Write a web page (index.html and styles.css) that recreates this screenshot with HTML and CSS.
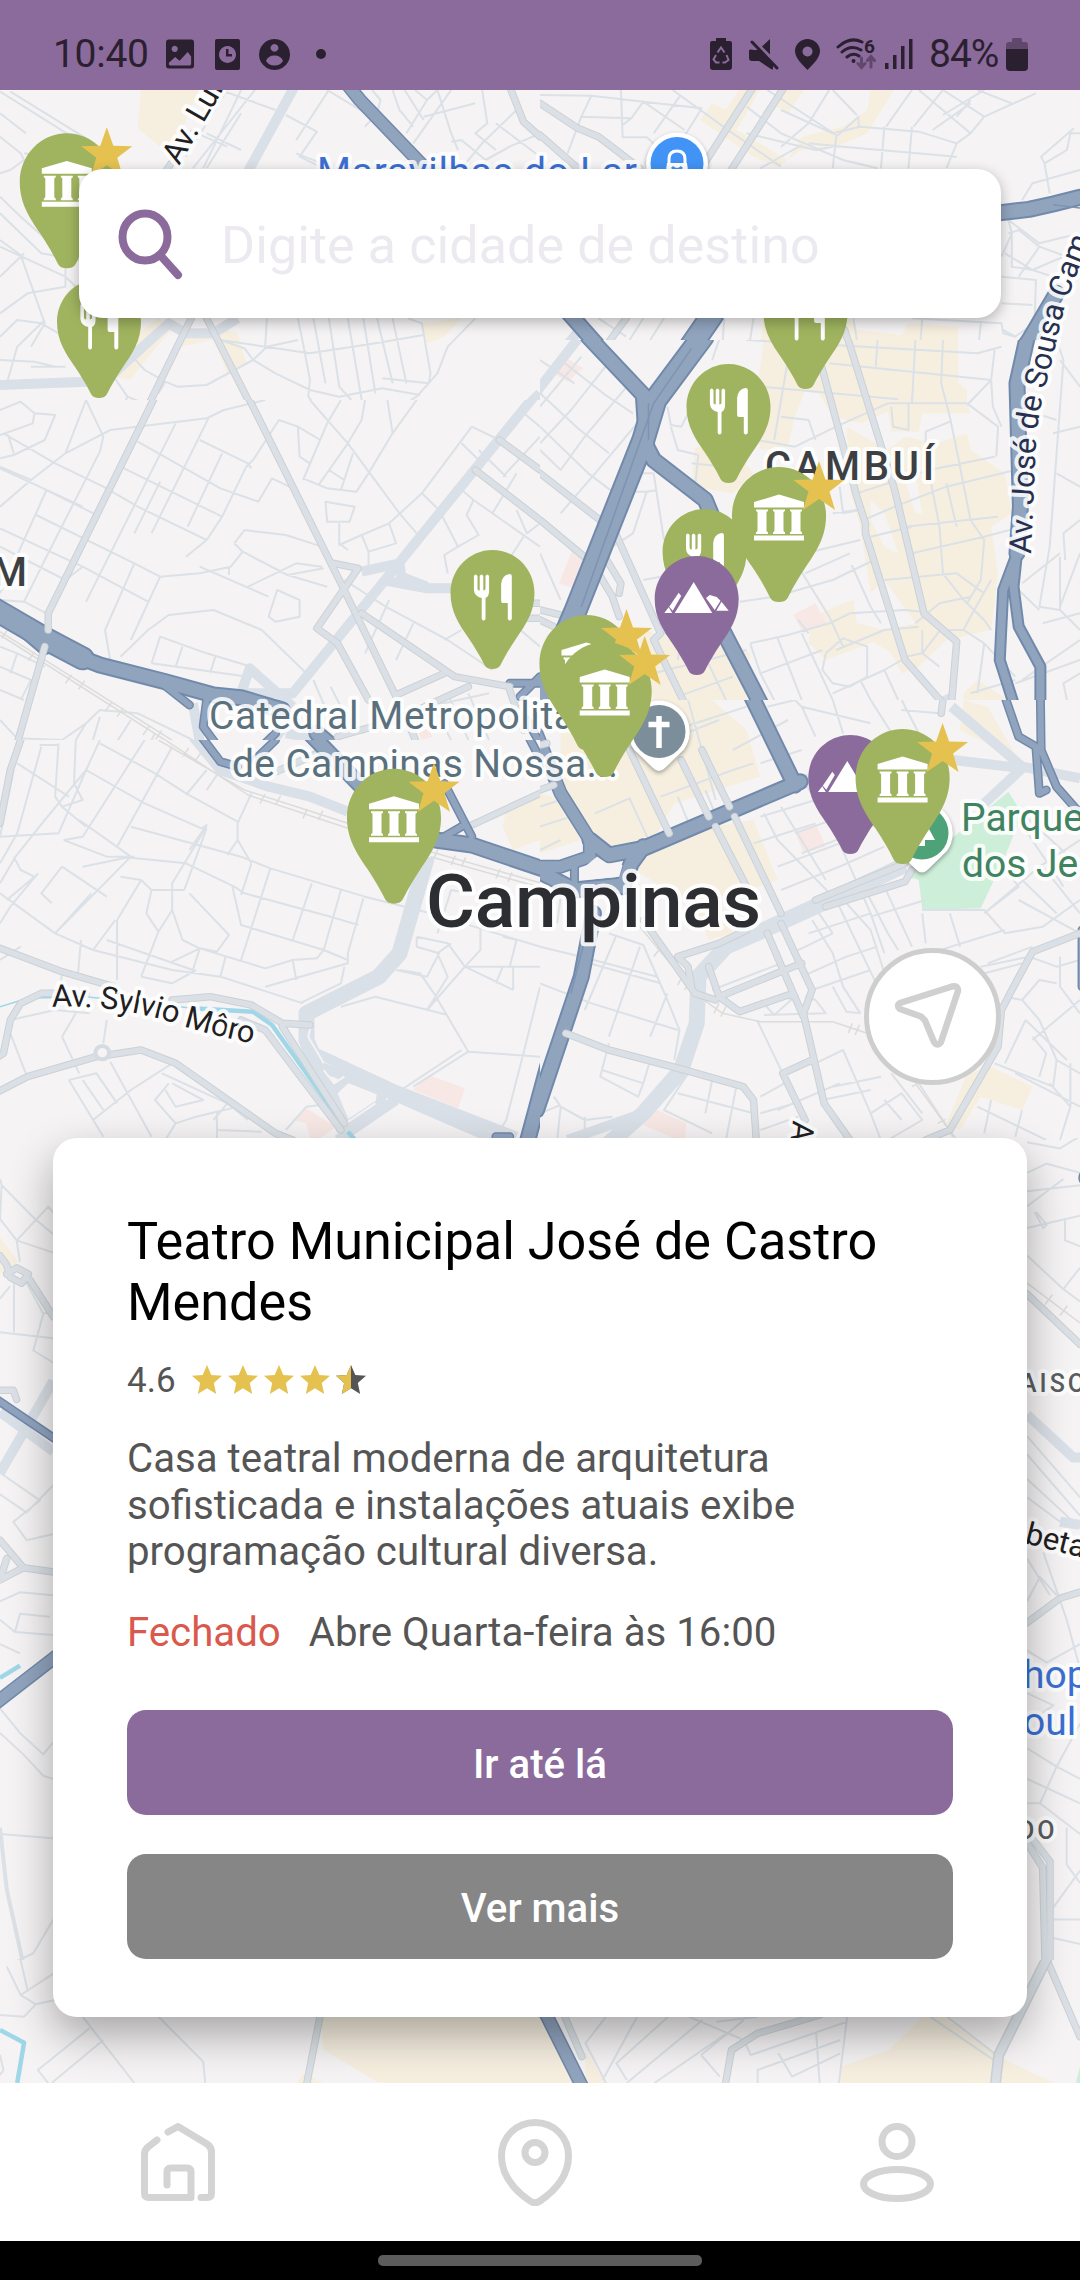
FILE: index.html
```html
<!DOCTYPE html>
<html lang="pt-BR">
<head>
<meta charset="utf-8">
<title>Mapa</title>
<link rel="stylesheet" href="styles.css">
</head>
<body>
<header class="status">
  <div class="status-left">
    <span class="clock">10:40</span>
    <svg class="ic-img" viewBox="0 0 30 30"><path fill-rule="evenodd" d="M3 0H26Q29 0 29 3V27Q29 30 26 30H3Q0 30 0 27V3Q0 0 3 0ZM9 6.500a3.200 3.200 0 1 0 .01 0ZM3 25.500Q3 27 5 27H24Q26 27 26 25V17.500L22.500 13 14 22 9.500 18 3 24Z"/></svg>
    <svg class="ic-clock" viewBox="0 0 25 31"><path fill-rule="evenodd" d="M2 0H23Q25 0 25 2V29Q25 31 23 31H2Q0 31 0 29V2Q0 0 2 0ZM12.500 7a8.500 8.500 0 1 0 .01 0ZM11 10H13.500V15H17V17.500H11Z"/></svg>
    <svg class="ic-user" viewBox="0 0 31 31"><path fill-rule="evenodd" d="M15.500 0a15.500 15.500 0 1 0 .01 0ZM15.500 5a3.900 3.900 0 1 1-.01 0ZM7 22Q9 16.500 15.500 16.500T24 22Q21 26.500 15.500 26.500T7 22Z"/></svg>
    <i class="dot"></i>
  </div>
  <div class="status-right">
    <svg class="ic-recycle" viewBox="0 0 22 32"><path d="M6 0H16V3H20Q22 3 22 6V29Q22 32 19 32H3Q0 32 0 29V6Q0 3 2 3H6Z"/><path class="cut" d="M7.500 14.500 11 9.500 14.500 14.500M16.500 17 18.500 22 15 24.500H12.500M9.500 24.500H6L3.500 21.500 6 17"/></svg>
    <svg class="ic-mute" viewBox="0 0 30 31"><path d="M0 11 2 10.500 5 11 10 11 24 26V30.500L22 30 10 22H3Q0 22 0 19ZM13 7.500 21 0V15.500Z"/><path class="ln" d="M3 3 28 29"/></svg>
    <svg class="ic-loc" viewBox="0 0 25 31"><path fill-rule="evenodd" d="M12.500 0C19 0 25 5 25 12 25 19 18 25 12.500 31 7 25 0 19 0 12 0 5 6 0 12.500 0ZM12.500 7.500a5 5 0 1 0 .01 0Z"/></svg>
    <svg class="ic-wifi" viewBox="0 0 40 32"><path class="ln" d="M2 9Q14-2 26 4M6 14Q15 6 25 12M11 19Q17 14 23 18"/><circle cx="17.500" cy="23" r="2"/><text x="28" y="14.500">6</text><path class="ln faint" d="M25.500 20v9m-3.500-3.500 3.500 4 3.500-4M35 29V19m-3.500 3.500 3.500-4 3.500 4"/></svg>
    <svg class="ic-signal" viewBox="0 0 28 30"><path d="M0 24h3.500v6H0ZM8 16h3.500v14H8ZM16 7h3.500v23H16ZM24 0h3.500v30H24Z"/></svg>
    <span class="pct">84%</span>
    <svg class="ic-batt" viewBox="0 0 22 33"><path class="pale" d="M6 1Q6 0 8 0H14Q16 0 16 1V4H19Q22 4 22 7V11H0V7Q0 4 3 4H6Z"/><path d="M0 11H22V29Q22 33 18 33H4Q0 33 0 29Z"/></svg>
  </div>
</header>

<main class="map">
  <svg class="streets" viewBox="0 90 1080 1993">
    <defs>
      <path id="pin" d="M0 0C23 0 42 19 42 43C42 62 33 75 24 88C18 97 13 105 8 115Q6 119 0 119Q-6 119-8 115C-13 105-18 97-24 88C-33 75-42 62-42 43C-42 19-23 0 0 0Z"/>
      <g id="food"><use href="#pin" class="g"/><path class="w" d="M-18.600 26q1.800-3 3.600 0V39q.5 1.500 2.200 1.500V26q1.800-3 3.600 0V40.500q2-.2 2.200-1.500V26q1.800-3 3.600 0V40Q-3.200 46.500-7 48V69q-1.900 3-3.800 0V48Q-18 46.500-18.600 40ZM8.600 34Q9.500 25 17 24q2.300 0 2.300 2V69q-2 3-4 0V53H10.500q-1.900 0-1.900-2Z"/></g>
      <g id="nature"><use href="#pin" class="p"/><path class="w" d="M-3 26 15.500 57H-22ZM-18 36.700-15.500 40-24 54.700-27.500 50.700ZM-32.400 57-28 51.300-24.500 57ZM9.300 42 13 39 20 41 23.800 44.700 18 54ZM19.600 54.700 24.800 45.700 32 54.700Z"/></g>
      <g id="museum"><use href="#pin" class="g" transform="scale(1.120 1.134)"/><path class="w" d="M0 27.600 25 35V40.500H-25V35ZM-23 42.500h12v1.500l-1.500 1V64l1.500 1.500V67H-23V65.500L-21.500 64V45L-23 44ZM-6 42.500H6v1.500L4.500 45V64L6 65.500V67H-6V65.500L-4.500 64V45L-6 44ZM11 42.500H23v1.500L21.500 45V64L23 65.500V67H11V65.500L12.500 64V45L11 44ZM-25 68.500H25V73.500H-25Z"/><path class="s" d="M40-6 46.500 12.500 65.500 13 50.500 24.500 56 43 40 32 24 43 29.500 24.500 14.500 13 33.500 12.500Z"/></g>
      <path id="sylvio" d="M52 1007Q112 1004 170 1022T262 1045"/>
      <path id="sousa" d="M1031 554L1036 445Q1038 410 1050 370L1063 313Q1070 290 1090 240"/>
    </defs>
    <rect class="land" y="90" width="1080" height="1993"/>

    <svg x="0" y="0" width="540" height="400" viewBox="0 0 1568 1200" preserveAspectRatio="none">
      <defs><path id="nw-mid" d="M555 955L410 1260M600 955L750 1260M1480 260L1520 365 1568 410M480 515L560 400"/><path id="nw-main" d="M1010 255L1045 300 1240 510"/></defs>
      <path class="yl" d="M410 260H580L520 410 470 445 400 385ZM400 1000L460 955 500 985 400 1110 380 1140 330 1130ZM520 1040L620 1020 660 1120 715 1090 690 1000 640 985 540 1010ZM1225 970L1340 955 1290 1010 1240 1030Z"/>
      <path class="st" d="M0 275L240 430M30 275L250 415M0 340L75 400M0 410L60 460 70 480 30 510 0 520M70 460L150 470M0 590L60 650 180 760M0 640L120 760 230 780M0 720L60 765 130 970 90 1040M0 740L190 830 240 880M70 760L0 830M0 940L80 880 190 860V800M0 1010L50 960 120 970 170 1000M0 1080L100 1085 160 1100M20 1150L50 1040 130 960M90 1100H190M330 1130L370 1190 340 1260M370 1190L430 1215M385 1070L420 1110 480 1145 515 1160 600 1155 735 1080 775 1040 865 1020M480 1145L460 1180M735 1080L710 1045 640 1020 770 1040 900 1060 1090 1030 1230 1005M775 955L770 1040M735 1080L800 1120 900 1170 985 1190 1110 1165 1220 1185M865 955L880 1030 900 1140 895 1190 950 1260M910 955L945 1150M955 955L985 1160 1020 1200M1010 955L1060 1260M1055 955L1090 1180M1095 955L1140 1150M1140 955L1180 1150M1185 955L1225 970 1250 1120 1245 1150 1110 1135M1380 955L1300 1040 1270 1120 1210 1190 1100 1260"/>
      <path class="st" d="M660 270L540 470M740 270L560 505M700 340L600 505M640 270L800 330M600 400L700 450M560 395L660 440M700 270L590 505M830 345L920 395 870 470 930 500M860 460L960 500M950 270L1110 370M955 270L860 420M1080 270L1105 300 1095 340 1060 380M1140 270L1160 330 1200 380M1175 270L1230 360M1205 270L1240 300 1270 270 1310 400 1330 450M1310 270L1200 430M1230 350L1380 310M1240 300L1180 400M1400 270L1415 370 1380 400 1440 450M1440 370L1568 470M1500 330L1400 430 1340 505M1310 425L1340 420 1410 480 1480 440 1568 400"/>
      <path class="wd" d="M855 260L720 515M0 1155L250 1145 330 1120 490 970 540 1000H620L690 955M1568 1180L1490 1260"/>
      <use href="#nw-mid" class="me"/><use href="#nw-mid" class="md"/>
      <use href="#nw-main" class="he w12"/><use href="#nw-main" class="hw w12"/>
    </svg>

    <svg x="540" y="0" width="540" height="340" viewBox="0 0 1568 1020" preserveAspectRatio="none">
      <defs><path id="ne-mid" d="M0 310L110 385 170 410 290 505M0 405L110 505M620 260L490 470 465 510M710 260L555 510M250 955L190 1040M885 990L895 1025"/><path id="ne-main" d="M80 935L170 1040M1320 640L1420 628 1490 612 1568 592M1500 880L1420 1020 1400 1050"/><path id="ne-fork" d="M500 945L430 1050"/></defs>
      <path class="yl" d="M500 310L540 330 580 265H640L600 340 570 390 720 480 760 410 880 380 950 330 960 265H1030L950 400 860 440 760 450 690 500 620 470 465 360ZM690 265H770L720 340 670 310ZM650 955H900L920 990 1050 1005 1070 970 1215 980V1020H640Z"/>
      <path class="st" d="M0 285L150 287 300 305 470 325M150 285L120 350 80 460M120 350L265 355 300 305M235 270L240 412H310L340 440M240 375L265 355M300 305L420 390M405 290L330 400M385 270L560 400 700 500M470 325L400 440M600 320L700 400 880 480 980 505M600 400L800 450 850 440M660 270L860 405M700 330L850 400 930 380 1100 395 1210 430 1180 505M700 440L780 370 840 270M760 435L640 505M780 430L880 440 1210 470M860 410L925 350V380M850 270L920 345M860 410L850 505M1000 380L990 505M1080 380L1070 505M1005 380L1080 270M1085 380L1170 270 1290 350 1250 400 1210 430M1100 270L1250 400M1170 345L1290 270M1290 350L1440 280M1210 350L1250 300M1270 270L1370 310M1140 390L1250 310M1550 385L1455 470 1465 490 1530 450 1540 400H1568M1465 490L1480 580M1568 510L1430 550 1400 600M1340 770L1370 700 1360 660 1450 730 1568 700M1360 700L1390 690 1450 740 1530 770M1370 700V800L1430 810 1490 830M1350 760L1430 810 1520 770M1340 830L1440 840 1435 1000M1340 910L1430 915M1345 990L1380 1010 1435 970M1450 740L1390 830M535 955L530 1030M620 955L610 1020M910 955L920 1020M1110 955L1105 1020M1080 955L1340 970 1345 1000 1380 1010M1280 970L1275 1020M170 955L250 1010M300 955L260 1020M360 955L320 1020"/>
      <use href="#ne-mid" class="me"/><use href="#ne-mid" class="md"/>
      <path class="wd" d="M130 970L60 1060"/>
      <use href="#ne-main" class="he w16"/><use href="#ne-fork" class="he w22"/><use href="#ne-fork" class="hw w22"/><use href="#ne-main" class="hw w16"/><path class="hl" d="M1490 614L1568 624"/>
    </svg>

    <svg x="0" y="400" width="540" height="340" viewBox="0 0 1568 1020" preserveAspectRatio="none">
      <defs><path id="w-mid" d="M450-10L140 640V690M130 740L50 1030M720-10L850 260 990 550 1150 890M970 490L1040 505 920 685 980 730 1070 900M1050 640L1320 830 1480 860M1450 120L1568 210M1380 210L1568 360M1360 860L1150 960 980 1010M1150 885L1290 820M1480 870L1520 990M1190 980L1210 1030M1535 610H1568M1535 655H1568"/>
      <path id="w-a" d="M-20 625L130 715 240 775"/><path id="w-b" d="M240 775L290 795 480 845 620 885 700 893 820 930M920 1000L990 1060M50 670L130 740"/><path id="w-c" d="M470 850L550 915M600 900L590 980 640 1050M1480 850H1568M1568 830L1510 890M1530 960L1568 1030M740 1060L800 1000"/></defs>
      <path class="pk" d="M1215 1000L1245 985 1255 1010 1225 1020Z"/>
      <path class="st" d="M0 30L60 5 100 40 95 70 0 105M100 40L160 45 130 120 40 165 0 175M250 0L190 160M250 0L300 110 290 155M0 200L90 240 190 160 320 90 600 55 650 30 770 0M10 100L160 190 300 260 400 320 600 420 540 470M0 320L90 240M40 160L25 110M400 125L640 265 750 305 790 235 840 260M350 200L645 350M645 350L715 200M580 120L720 190 730 205M715 200L735 180 810 60 865 80 930 120M510 70L330 440M605 55L440 400M645 160L545 380M465 245L390 400M290 155L130 480M135 270L0 580M0 205L240 320M135 270L290 350M105 345L390 490M0 385L240 500 430 605M0 440L190 540M130 480L70 605M0 600L70 605 135 640M240 500L190 540M330 440L250 605M645 350L600 420M465 530L380 720M390 490L465 530 580 520 670 500 705 455 680 430M580 500L780 590M680 430L710 390 830 405 935 440M705 455L835 525 950 560M720 560L860 490 935 500M835 525L940 505M665 500V525M780 650L805 570 870 600V650L800 665ZM305 690L320 780M305 690L390 490M350 770L430 690 490 645 620 630 760 690 900 830M440 790L465 710 600 760 730 800M440 790L720 830M530 740L510 800M625 770L610 820"/>
      <path class="st" d="M900 0L1010 130 1160 340 1210 400M990 0L950 70 880 240M1060 0L1050 60 1010 130 925 255M1125 0L1140 100 1210 0M1140 100L1070 220 1035 275 950 265 880 235M1025 160L990 270M955 210L1000 240M865 80L870 170 900 190M945 305L1030 320 1015 365H950ZM1370 80L1225 280 1130 370 1050 405 985 435V370M1340 130L1390 180M1370 80L1450 120M1130 370L1150 430 1070 455 1050 405M1010 450L985 430M1070 455V520M1225 280L1275 330 1330 440 1290 465 1300 520M1335 265L1375 300 1355 345 1390 405 1330 440M1375 300L1568 440M1510 30L1568 80M1430 340L1500 220M1460 230L1568 110M1500 330L1530 400 1568 370M1520 410L1440 540M1390 150L1470 230M1000 540L1120 620 1300 720 1430 810M1200 670L1150 780M1130 600L1060 760M1290 720L1340 690M910 840L960 960M1050 1000L1200 930 1420 880M960 860L1020 980M1300 880L1360 1020M1360 880L1420 1020M1250 900L1310 1020M1500 680L1568 740M0 740L50 760 130 800M50 760L30 820M0 800L90 840 60 900M0 870L70 900M0 960L50 1015 180 1020 250 970 290 930 400 940 560 1020M60 1030L200 1025M250 970L220 1020M380 960L330 1040M450 1000L420 1060M290 950L270 1020"/>
      <path class="rl" d="M0 695L560 1060M0 705L540 1060M190 850l18-26M228 868l18-26M305 935l18-26M340 950l18-26M415 1005l18-26M452 1018l18-26M5 715l16-24M82 782l18-26"/>
      <path class="wd" d="M1550-10L1150 500 850 880H700M560 910L580 1025M1110 540L1240 565H1310M1160 490L1165 530 1240 560M1050 515L1160 490M700 880L725 805 850 920M780 1040L840 960 910 1010M830 1000L920 1015"/>
      <use href="#w-b" class="he w16"/><use href="#w-c" class="he w8"/><use href="#w-a" class="he w22"/><use href="#w-a" class="hw w22"/><use href="#w-b" class="hw w16"/><use href="#w-c" class="hw w8"/>
      <use href="#w-mid" class="me"/><use href="#w-mid" class="md"/>
    </svg>

    <svg x="540" y="340" width="540" height="360" viewBox="0 0 1568 1080" preserveAspectRatio="none">
      <defs><path id="e-mid" d="M892-10L1030 450 1115 820 1210 905 1195 1090M815 70L920 470 945 550V580L1060 960 1170 1090M0 400L180 545M0 540L140 660M0 810L80 830M0 840L40 860M215 570L350 880 330 900 420 1090M170 700L210 770 230 830M170 620L235 730 230 760"/>
      <path id="e-a" d="M472-10L335 180 300 300 100 820 0 1060"/><path id="e-b" d="M140-10L300 165 310 320 330 360 480 480 500 530M530 870L640 1090M1415-10L1385 130 1395 500 1385 640"/><path id="e-c" d="M1385 640L1345 750 1335 960 1375 1090M1385 640L1375 740 1390 860 1453 980V1090"/></defs>
      <path class="yl" d="M650 0H1215V130L1240 150V190L1250 220H1110L1100 275H1020L1010 215 930 250 850 230 810 160 770 150 740 230 720 320 640 330 620 220ZM890 260L1010 330 1060 290 1150 310 1240 280 1250 330 1350 400 1370 520 1310 560 1330 700 1310 870 1180 900 1100 980 1050 1000 1020 940 960 900 1000 870 1090 850 1000 720 960 760 930 560 900 450ZM790 830L880 790 910 780 920 850 1000 870 960 910 830 960 780 910ZM450 320L560 330 620 400 560 460 440 440ZM280 860L330 880 560 900 610 940 600 1080H330ZM1230 1060L1270 1020 1360 1080H1230Z"/>
      <path class="land" d="M960 480L1000 520 1040 640 1000 620 960 540ZM1060 420L1090 400 1110 520 1090 520Z"/>
      <path class="pk" d="M735 825L800 790 830 850 765 880ZM90 640L140 655 100 745 55 730ZM70 50L125 85 80 125 30 95Z"/>
      <path class="st" d="M0 60L100 130M60 60L190 165 270 220M0 160L110 265 200 340M190 80L90 210 0 310M260 130L130 290M120 50L0 200M0 260L140 400 230 470M290 240L160 400 60 520M0 330L60 390 130 290M270 400H330L360 600M265 455H310L270 580 210 620M310 455L340 450M300 720L350 710 400 700M0 640L60 780M60 590L100 640M520 0L500 60M370 200L380 255 410 260 440 200M380 260L400 330 460 345M630 300L740 320 860 260 1010 190H1240L1330 260 1325 350M640 140L1040 178M720 60L680 300M840 70L1310 120 1320 30M600 0L1270 40 1340 20M980 0L975 80M1090 0L1080 190M1170 0L1165 130 1190 230 1210 330M1310 120L1240 195M1310 120L1315 200 1340 260M1020 200L1025 260 1070 270V190M1120 310V275L1190 245M700 230L780 240 800 300M440 370L540 380M460 345L450 440"/>
      <path class="st" d="M870 440L880 520 930 510M920 460L1010 430 1130 390 1320 350M940 540L1030 500 1180 440 1380 390M1060 560L1240 540 1330 530M770 640L930 600M850 520L920 510M1080 640L1290 590 1400 560M770 700L900 640M750 680L810 780 840 830 880 920M905 675L960 800 990 850M960 590L1080 560M580 785L680 770 850 720 970 660M1000 720L1210 700 1290 760M840 850L900 820 1060 810 1110 815M750 840L780 880M860 930L1000 870 1100 860M1090 850L1160 790 1250 770M1130 400L1160 560 1170 700 1230 780 1290 840 1310 870M1210 330L1250 540 1290 600 1280 720 1240 790M1180 430L1210 560M1060 560L1090 690M1160 870H1230L1290 910 1380 1010M1170 860L1110 940 1060 950M1110 870V940L1160 980M1230 870L1250 830 1310 720M610 910L640 1000 680 1080M610 910L720 885 840 850M690 895L760 1080M760 880L850 1080M830 940L820 990 850 1030 900 1040 950 1010V920L880 895 830 940M850 1060L1000 990 1050 960M930 1020L960 1080M1000 990L1040 1080M640 1000L820 930M330 1000L600 930M360 960L420 1080M470 930L540 1080M340 870L410 900 400 960M400 1070L560 1010"/>
      <path class="st" d="M1500 0L1520 60 1480 620 1450 800 1510 810 1568 870M1568 140L1510 60M1568 540L1520 580 1525 660M1510 640L1400 730M1510 650V810M1450 810L1380 740M1568 640L1510 800M1460 850L1568 820M1568 900L1400 1020M1568 960L1380 1030M1568 1000L1520 1030 1530 1080M1490 280L1568 260M1440 220L1500 240M1500 400L1568 440M1250 1060L1380 1020M1290 910L1270 1060"/>
      <path class="wd" d="M115-10L-10 155M1160 1090L1200 1070"/>
      <use href="#e-mid" class="me"/><use href="#e-mid" class="md"/>
      <use href="#e-b" class="he w16"/><use href="#e-a" class="he w22"/><use href="#e-c" class="he w10"/>
      <use href="#e-a" class="hw w22"/><use href="#e-b" class="hw w16"/><use href="#e-c" class="hw w10"/>
      <path class="hl" d="M440 25L330 190 210 540 120 800M315 190V300"/>
    </svg>

    <svg x="0" y="740" width="540" height="400" viewBox="0 0 1568 1200" preserveAspectRatio="none">
      <defs><path id="sw-mid" d="M0 625L180 695 330 740M60 0L30 90 0 250M250 760H120L60 790 30 840 10 940-5 950M-5 1055L80 1010 280 950 410 930 510 970 800 1180 850 1200M500 780L610 770 730 795 820 850 900 855M700 840L770 870 990 1170M820 860L1000 1150M1568 160L1360 260M770 110L900 50 940 30"/>
      <path id="sw-a" d="M1265 300L1370 315 1580 388M1590 980L1530 1210M900-20L1050 140"/><path id="sw-b" d="M585-10L640 65 690 80M1290 130L1370 290M1265 305L1340 260M740 60L800 0M1535-10L1560 40M1440 1190H1480"/></defs>
      <path class="yl" d="M1470 210L1568 170V300L1490 330 1460 260Z"/>
      <path class="pk" d="M1245 1005L1350 1045 1330 1105 1200 1050ZM890 1105L975 1160 930 1195H900L890 1150 850 1140Z"/>
      <path class="st" d="M290 0L250 90 130 240 45 350 0 430M50 70L200 170M40 90L0 290 170 280 250 90M170 10L160 170 180 200 240 180 215 130 220 0M120 20L50 280 0 370M115 15H170M290 10L450 100 540 160 690 245M250 90L420 190 585 265 600 255 550 330M500 20L410 190 340 320M420 0L240 290 185 300M600 90L540 165M640 90L600 150M230 240L380 350 240 380M180 200L250 260M380 260L700 350 785 385 1060 470 1250 520 1568 620M350 350L540 370 680 440 710 460 960 530 1040 555M185 300L310 350H390M600 260L500 430M600 265L535 450M380 350L160 580M40 350L60 390 100 410 20 480M180 380L120 460 150 490M0 460L160 580 270 630 500 690 640 710 880 790M180 380L310 470M265 460L160 580M110 400L30 500 0 550M350 410L410 420 440 450 425 520 460 575 410 710M440 450H535M500 430V510L530 600 580 625M500 510L460 575M340 540V720M340 540L410 420M335 540L270 630M235 600L225 720M310 600L560 690 580 625 630 635 665 585 550 460M580 625L500 665M570 690L500 730 410 710M580 625L770 685 850 660 920 655 940 630 1010 660M850 660L860 720M655 650L640 710M785 385L700 660M730 370L700 465M675 440L700 555 940 630M905 430L850 600M990 450L940 630M1055 475L1010 640V670L770 740M1000 680L990 730 870 790M730 160L690 250V300L660 345M690 300L730 370"/>
      <path class="st" d="M1210 590L1300 610 1350 680 1490 750M1210 590V620L1275 640 1240 710 1150 690M1270 640L1300 710 1240 810M1310 610L1270 640M1350 680L1395 630V560M1350 680L1240 810M1350 680H1568M1460 680L1440 730M1490 680V750M1270 580L1310 450 1360 460M1460 590L1500 600 1480 680M1160 690L1220 700 1260 760 1360 935 1568 950M1090 770L1300 825M990 800L1090 770M1360 935L1200 1040M1340 930L1150 1060M1520 940L1470 1140 1440 1190M1568 740L1520 940M0 660L60 620M180 700L175 740M310 840L300 910M180 890L230 1000M180 890L220 820M30 840L160 810 260 820M30 880L75 1000M200 1020L280 1000 340 1090M200 1020L300 1190M320 965L440 1190M500 970L380 1050 270 1140M240 1020L300 1110M470 1000L660 1090 720 1140M490 1030L450 1080 510 1150 570 1130 690 1100M500 1030L590 1080 510 1100 480 1050M630 1120V1200M630 1170L760 1175M510 1150L480 1200M660 1090L620 1140M830 1170L890 1100 930 1095"/>
      <path class="rl" d="M460 0L710 150 1010 250M480 0L720 165 1010 265M1250 335L1568 428M1250 350L1568 442M755 190l15-28M800 195l15-28M880 235l12-28M925 240l12-28M530 50l18-26M565 65l18-26M1260 355l12-28M1310 375l12-28M1340 380l12-28M1440 415l12-28M1475 425l12-28"/>
      <path class="wd" d="M560-10L640 90 780 140 900 170 1010 215M900 930L1150 1050 1500 1190M930 980L1150 1070 1440 1200M970 1050L1010 1010M1110 1050L1105 1090 990 1170M1150 1080L980 1200"/><path class="wd w18" d="M1240 350L1160 640 1100 710 890 820V900L1000 1170"/>
      <path class="gap" d="M905 850L895 890 940 970M940 990L970 1030 1000 1010M990 1160L1090 1090"/>
      <path class="wt" d="M560 805L735 815 790 855 990 1145M1010 1175L1040 1210"/><path class="wt thin" d="M0 800L80 775 250 770 560 805"/>
      <use href="#sw-mid" class="me"/><use href="#sw-mid" class="md"/>
      <circle class="round" cx="297" cy="938" r="20"/>
      <use href="#sw-a" class="he w16"/><use href="#sw-b" class="he w8"/><use href="#sw-a" class="hw w16"/><use href="#sw-b" class="hw w8"/>
    </svg>

    <svg x="540" y="700" width="540" height="440" viewBox="0 0 1568 1320" preserveAspectRatio="none">
      <defs><path id="se-mid" d="M260 150L375 400M410 180L490 350M470 150L550 320M510 380L600 560M565 350L700 640M400 770L520 730 600 690M700 670L790 870 765 940 825 1210 900 1320M660 700L710 820 765 950M490 800L520 890 580 935 720 885 740 890M520 890L760 790M770 1260L705 1120 790 1080M75 1000L200 1050 420 1110 590 1160 620 1200 628 1320M300 660L450 880 510 900M1170 0L1165 40M1568 700L1430 755 1370 870 1340 930 1330 1040 1190 1290 1120 1320M1060 490L800 600M1080 510L1060 545 830 620M400 770L430 800 440 860M20 130L0 135M0 270L40 255"/>
      <path id="se-a" d="M615-10L740 255M755 245L300 445 200 465 145 420M300 440L265 490 240 560M-20 505L100 570 240 555M155 640L120 830-10 1230"/><path id="se-b" d="M-10 100L60 280 145 420V470L60 500H0"/><path id="se-c" d="M1350-10L1390 110 1440 140 1450 280 1470 270M1453-10L1455 150 1500 260 1568 340M100 500V560M1574 690V860"/></defs>
      <path class="yl" d="M60 0H500L600 90 640 230 390 310 340 400 180 460 130 400 70 300 60 180ZM0 280L60 300 120 420 0 460ZM200 440L500 380 620 360 690 540 520 600 560 700 490 720 450 620 290 520ZM1230 0L1300 20 1390 180 1220 90ZM1310 1100L1430 1160 1400 1230 1280 1190 1220 1290 1180 1270 1240 1120Z"/>
      <path class="gr" d="M1360 275L1400 340 1350 470 1280 625 1110 630 1100 540 1070 530 1120 480Z"/>
      <path class="pk" d="M740 395L800 370 830 440 765 460ZM340 1230L425 1270 420 1320H400L300 1275Z"/>
      <path class="st" d="M430 0L510 300M60 200L480 60 600 20M300 150L520 60M160 340L260 295 320 430M400 290L440 390M480 270L520 370M350 290L560 210 620 190M0 380L90 350M0 320L60 300 90 340M0 450L60 420M560 150L720 60M640 190L760 150M660 20L740 0 760 20 800 110M760 20L960 70M850 0L880 100M960 0L1040 130M1050 0L1100 100M1050 30L1160 40M620 300L780 250M640 350L800 300 770 250M700 320L830 540M740 400L900 340M650 340L690 420 860 600 990 880M620 430L800 370M760 460L1060 340M690 500L870 430M700 570L870 500 1000 440M830 340L870 430 960 640 1000 760M930 540L1010 700 1040 750M1000 560L1080 740M960 650L1120 600M1110 630H1290L1350 700 1460 680 1568 600M890 610L960 690 1010 850M780 700L870 670 960 640M790 660L850 760 880 860 930 940M730 760L850 700M760 830L890 770 980 740M790 870L960 810M850 700L810 640M1110 640L1120 730M1190 640L1220 740M1130 760L1350 690M1290 640L1450 500 1568 420M1290 640L1390 560 1330 480M1400 340L1568 500M1390 360L1520 560M1460 500L1568 640M1360 500L1500 640M1390 600L1568 700"/>
      <path class="st" d="M1280 800L1420 770 1500 800 1568 780M1300 790L1430 740M1290 820L1400 790M1350 890L1400 900 1450 960 1500 1080 1568 1120M1430 1020L1568 900M1410 960L1350 1090M1410 960L1530 1080M1510 770V860L1568 940M1400 900L1450 840 1500 850M1500 1080L1490 1160 1320 1090M1380 1120L1568 1220M1430 1010L1470 1060 1450 1130M1540 1090V1220M1270 1220L1470 1320M1310 1200L1290 1300M1400 1230L1380 1310M1480 1150L1540 1220 1510 1320M630 960L700 1110M690 1230L870 1150M800 1090L880 1050 960 1240 990 1320M960 1240L1050 1180 1110 1260 1010 1320M1000 1200L1050 1260M1020 1120L1110 1240M850 1160L990 1130M820 1200L960 1170M640 1190L710 1150M640 1240L740 1210M640 1290L750 1250M1100 1150L1200 1310M930 940L890 935 850 860M200 700L300 735 370 900 405 990 390 1080M0 740L120 770 340 830M220 710L130 930M290 740L200 1010M110 780L350 850M0 850L150 910 400 990M370 880L320 1010M180 1110L300 1150 320 1080M180 1110L175 1130 285 1190 300 1150M180 1110L200 1030M400 1180L620 1240M430 1120L360 1230 500 1300M500 1140L480 1240M570 1160L540 1320M40 1190L60 1220 130 1260 210 1250M60 1220L50 1320M130 1250V1320M0 1240L60 1215M500 870L700 790M640 900L680 945 740 890M650 945L830 940 800 900 770 890M0 600L60 590 50 670"/>
      <path class="rl" d="M290 680L450 880 530 940 640 965H850L950 1000M1090 1150L1210 1320M330 770l15-20M400 855l10-20M420 870l12-20M505 940l15-30M525 950l15-30M895 1000l12-30M915 1005l12-30M1080 1160l22-12M1155 1270l22-12"/>
      <path class="wd w18" d="M1060 495L830 605 650 690 540 740 460 830 455 970 410 1110 300 1240 200 1330"/><path class="wd" d="M1195 20L1400 200 1568 235M1200 180L1400 205 1290 310M80 1320L300 1240M750 245L780 235"/>
      <use href="#se-b" class="he w12"/><use href="#se-a" class="he w16"/><use href="#se-c" class="he w8"/>
      <use href="#se-a" class="hw w16"/><use href="#se-b" class="hw w12"/><use href="#se-c" class="hw w8"/>
      <use href="#se-mid" class="me"/><use href="#se-mid" class="md"/>
      <path class="land" d="M165 470L195 490 240 495 230 530 130 540 125 505Z"/><path class="hl" d="M130 720L90 880"/>
    </svg>

    <svg x="0" y="1140" width="60" height="820" viewBox="0 16 180 1340" preserveAspectRatio="none">
      <defs><path id="l-mid" d="M0 205L20 220 30 240 65 250 85 235 50 225 20 235M90 245L160 305M20 700L0 735 70 715 160 722M0 670L70 715M0 425L40 425 50 440"/><path id="l-a" d="M-10 440L180 510"/><path id="l-b" d="M-10 935L180 855"/></defs>
      <path class="yl" d="M0 175L55 215 0 235Z"/>
      <path class="st" d="M0 80L5 90 0 145 50 180 160 200M5 90L105 145 160 170M50 180L145 125 160 135M50 180L60 215M0 330L160 340M42 250V330M75 245L130 300 100 360 160 380M130 300L160 295M0 275L30 255M0 595L80 625 160 580M0 560L120 605 40 640 80 670 160 660M0 770L60 755 160 760M0 800L45 820 160 825M45 820L60 790 150 795M0 840L60 855M0 945L60 985 130 1020 160 1000M0 985L70 1020 130 1055 160 1060M0 1150L160 1157M0 1366H20L100 1345 160 1290"/>
      <path class="wd" d="M0 560L160 410M0 460L160 525"/><path class="st thick" d="M0 1140L20 1240 85 1400"/>
      <use href="#l-mid" class="me"/><use href="#l-mid" class="md"/>
      <path class="wt" d="M0 895L60 875"/>
      <use href="#l-a" class="he w8"/><use href="#l-b" class="he w12"/><use href="#l-b" class="hw w12"/><use href="#l-a" class="hw w8"/>
    </svg>

    <svg x="1020" y="1138" width="60" height="822" viewBox="1260 13 180 1343" preserveAspectRatio="none">
      <defs><path id="r-mid" d="M1281 268L1440 350M1281 805L1380 765 1440 755M1281 1165L1328 1205 1335 1356M1300 1160L1350 1195V1356"/></defs>
      <path class="st" d="M1281 70L1340 55 1440 70M1281 20L1380 30 1440 10M1281 100L1440 90M1281 125L1390 80M1310 135L1340 155 1330 160 1305 135ZM1281 160L1440 140M1395 145V180L1440 190M1281 205L1390 260 1440 280M1390 260L1440 225M1281 500L1440 600M1281 530L1440 630M1281 570L1440 650M1281 600L1380 640M1281 770L1320 730 1370 760M1330 690L1400 800 1440 880M1281 700L1350 760M1281 850L1340 870 1440 840M1281 920L1360 940 1281 970M1281 1010L1370 1040 1440 970M1320 1100L1370 1040 1440 1060M1281 1100H1320L1440 1150M1281 1060L1440 1100M1400 1140V1200L1440 1230M1360 1270L1440 1210M1360 1290H1440M1360 1320L1440 1330"/>
      <path class="rl" d="M1281 250L1440 315M1335 285l22-16M1380 303l22-16"/>
      <path class="wd" d="M1281 465L1420 535H1450M1380 640L1440 645"/>
      <use href="#r-mid" class="me"/><use href="#r-mid" class="md"/>
      <circle class="dotb" cx="1445" cy="78" r="10"/>
    </svg>

    <svg x="0" y="1960" width="1080" height="123" viewBox="0 0 1568 369" preserveAspectRatio="none">
      <defs><path id="b-mid" d="M465 165L445 375M1190 165L1100 220 1062 270 1053 375M1520 0L1568 230M820 170L845 290"/><path id="b-a" d="M1520-5L1450 285 1445 375"/><path id="b-b" d="M792 160L845 379"/></defs>
      <path class="yl" d="M465 170H790L840 369H550L470 270ZM1340 170H1370L1450 290 1530 369H1220V320L1290 270ZM430 369L440 340 470 369ZM850 270L880 369H850Z"/>
      <path class="gr" d="M1568 320V369H1562Z"/>
      <path class="st" d="M30 105L10 20M40 90L30 0M30 105L52 133 80 120M52 133L35 170 0 165M30 105L78 40M120 170L195 369M130 205L55 330 70 369M150 240L75 369M230 170L295 305 298 369M0 285L5 330 0 345M880 170L850 250 880 369M925 170L875 360M970 170L895 310 910 360M1020 180L910 369M1055 220L950 369M1000 170L1080 240 1090 285 1230 185M1040 185L1100 170M1018 285L1045 350M1080 180L1018 285M1130 280L1150 350 1220 280M1100 369V330L1220 240M1230 170L1218 369M1185 220L1190 369M1350 170L1450 310M1375 170L1450 290"/>
      <path class="wt" d="M0 210L35 248 25 369"/>
      <use href="#b-mid" class="me"/><use href="#b-mid" class="md"/><use href="#b-a" class="me thickest"/><use href="#b-a" class="md thicker"/>
      <use href="#b-b" class="he w12"/><use href="#b-b" class="hw w12"/>
    </svg>

    <g class="lb">
      <text class="av" transform="translate(179 166) rotate(-60)">Av. Luiz</text>
      <text class="shop" x="317" y="185" textLength="320">Maravilhas do Lar</text>
      <text class="hood" x="765" y="480" textLength="173">CAMBUÍ</text>
      <text class="hood" x="-8" y="586">M</text>
      <text class="church" x="209" y="729" textLength="366">Catedral Metropolita</text>
      <text class="church" x="232" y="777" textLength="386">de Campinas Nossa...</text>
      <text class="city" x="426" y="927" textLength="335">Campinas</text>
      <text class="park" x="961" y="831">Parque</text>
      <text class="park" x="962" y="877">dos Je</text>
      <text class="av"><textPath href="#sylvio" textLength="205">Av. Sylvio Môro</textPath></text>
      <text class="av navy"><textPath href="#sousa">Av. José de Sousa Campos</textPath></text>
      <text class="av" transform="translate(793 1120) rotate(97)">Av.</text>
      <text class="small" x="1020" y="1392">AISO</text>
      <text class="av" transform="translate(1024 1543) rotate(14)">beta</text>
      <text class="shop" x="1023" y="1688">hop</text>
      <text class="shop" x="1023" y="1735">oul</text>
      <text class="small" x="1018" y="1839">DO</text>
    </g>

    <g class="poi">
      <circle class="halo" cx="677" cy="163.500" r="31"/><circle cx="677" cy="163.500" r="26.500" class="blue"/><path class="bag" d="M669 166v-7q0-8 8-8t8 8v7"/><path class="w" d="M667 163H687L690 185H664Z"/><path class="bag blueline" d="M672 167q5 5 10 0"/>
      <path class="halo" d="M659 700.500a31 31 0 0 1 25 49L665 768Q659 774 653 768L634 749.500a31 31 0 0 1 25-49Z"/><circle cx="659" cy="731.500" r="26.500" class="slate"/><path class="cross" d="M659 716v32M648.500 724.500h21"/>
      <path class="halo" d="M922 802a31 31 0 0 1 25 49L928 869.500Q922 875.500 916 869.500L897 851a31 31 0 0 1 25-49Z"/><circle cx="922" cy="833" r="26.500" class="leaf"/><path class="w" d="M922 816L935 840H925V846H919V840H909Z"/>
    </g>

    <use href="#food" x="99" y="279"/><use href="#food" x="805.500" y="270"/><use href="#food" x="728.500" y="364"/><use href="#food" x="704.600" y="509"/><use href="#food" x="492.500" y="550"/>
    <use href="#museum" x="66.800" y="133.300"/><use href="#museum" x="779" y="467"/><use href="#nature" x="696.700" y="556"/><use href="#nature" x="850.300" y="735"/>
    <use href="#museum" x="586.500" y="615"/><use href="#museum" x="604.700" y="642"/><use href="#museum" x="394" y="768.700"/><use href="#museum" x="902.600" y="729"/>
  </svg>

  <div class="search">
    <svg viewBox="0 0 66 72"><ellipse cx="27" cy="28" rx="22.500" ry="23.500"/><path d="M43 47L60 66"/></svg>
    <span>Digite a cidade de destino</span>
  </div>

  <div class="locate"><svg viewBox="0 0 70 72"><path d="M58 5.500 6 22Q2 24.500 6 28L27 35.500 31 39.500 40 61Q43.500 66 47 61L64 10Q64 4 58 5.500Z"/></svg></div>

  <section class="card">
    <h1>Teatro Municipal José de Castro Mendes</h1>
    <div class="rating">
      <span>4.6</span>
      <svg viewBox="0 0 174 29">
        <defs><path id="star" d="M15 0L19.300 9.900 30 10.800 21.800 18 24.200 29 15 23.200 5.800 29 8.200 18 0 10.800 10.700 9.900Z"/></defs>
        <use href="#star"/><use href="#star" x="36"/><use href="#star" x="72"/><use href="#star" x="108"/><use href="#star" x="144" class="off"/><path d="M159 0V23.200L149.800 29 152.200 18 144 10.800 154.700 9.900Z"/>
      </svg>
    </div>
    <p class="desc">Casa teatral moderna de arquitetura sofisticada e instalações atuais exibe programação cultural diversa.</p>
    <p class="hours"><span class="closed">Fechado</span><span>Abre Quarta-feira às 16:00</span></p>
    <button class="btn go">Ir até lá</button>
    <button class="btn more">Ver mais</button>
  </section>
</main>

<nav class="tabs">
  <svg viewBox="0 0 74 78"><path d="M27 9L37 3.500 66 21Q70.500 24 70.500 29V70Q70.500 74.500 66 74.500H60M16 17L7 24Q3.500 27 3.500 31V70Q3.500 74.500 8 74.500H50V49Q50 45 46 45H30Q26 45 26 49V62"/></svg>
  <svg viewBox="0 0 74 87"><path d="M37 3.500C56 3.500 70.500 18 70.500 37 70.500 56 58 71 42 82Q37 85.500 32 82C16 71 3.500 56 3.500 37 3.500 18 18 3.500 37 3.500Z"/><circle cx="37" cy="33.500" r="10"/></svg>
  <svg viewBox="0 0 74 79"><circle cx="37" cy="18.500" r="15"/><ellipse cx="37" cy="61" rx="33.500" ry="14.500"/></svg>
</nav>
<footer class="gesture"><i></i></footer>
</body>
</html>
```

FILE: styles.css
```css
* { box-sizing: border-box; }
body {
  margin: 0;
  width: 1080px;
  height: 2280px;
  display: flex;
  flex-direction: column;
  overflow: hidden;
  font-family: Roboto, "Liberation Sans", sans-serif;
  background: #fff;
}
svg { display: block; flex: none; }
h1, p { margin: 0; font-weight: 400; }

/* status bar */
.status {
  height: 90px;
  flex: none;
  display: flex;
  justify-content: space-between;
  padding: 30px 52px 12px 53px;
  background: #8b6b9c;
  color: #2a2030;
  font-size: 39px;
  line-height: 48px;
}
.status svg { fill: #2a2030; }
.status-left, .status-right { display: flex; align-items: center; }
.clock { width: 97px; letter-spacing: -0.3px; }
.ic-img { width: 29px; height: 30px; margin-left: 16px; }
.ic-clock { width: 25px; height: 31px; margin-left: 20px; }
.ic-user { width: 31px; height: 31px; margin-left: 19px; }
.dot { width: 10px; height: 10px; border-radius: 50%; background: #2a2030; margin-left: 26px; }
.ic-recycle { width: 22px; height: 32px; }
.cut { fill: none; stroke: #8b6b9c; stroke-width: 2; }
.ln { fill: none; stroke: #2a2030; stroke-width: 3; stroke-linecap: round; }
.ic-mute { width: 30px; height: 31px; margin-left: 17px; }
.ic-loc { width: 25px; height: 31px; margin-left: 16px; }
.ic-wifi { width: 40px; height: 32px; margin-left: 16px; }
.ic-wifi text { font-size: 19px; font-weight: 700; }
.ic-wifi .faint, .pale { opacity: 0.45; }
.ic-signal { width: 28px; height: 30px; margin-left: 9px; }
.pct { width: 77px; margin-left: 16px; letter-spacing: -1px; white-space: nowrap; }
.ic-batt { width: 22px; height: 33px; }

/* map */
.map {
  position: relative;
  flex: 1;
  display: flex;
  flex-direction: column;
  padding: 79px 53px 66px;
  overflow: hidden;
}
.streets { position: absolute; left: 0; top: 0; width: 1080px; height: 1993px; }
.streets path { vector-effect: non-scaling-stroke; }
.land { fill: #f5f3f4; }
.yl { fill: #f6efe0; }
.pk { fill: #f8e8e5; }
.gr { fill: #cdefd9; }
.st, .md, .me, .wd, .hw, .he, .hl, .rl, .wt, .gap { fill: none; stroke-linejoin: round; }
.md, .me, .hw, .he { stroke-linecap: round; }
.st { stroke: #dbe1e6; stroke-width: 2; }
.st.thick { stroke-width: 4; }
.me { stroke: #cbd1d5; stroke-width: 7.500px; }
.md { stroke: #dae0e5; stroke-width: 5.500px; }
.me.thickest { stroke-width: 11px; }
.md.thicker { stroke-width: 8px; }
.wd { stroke: #dae0e7; stroke-width: 10px; }
.wd.w18 { stroke-width: 16px; }
.gap { stroke: #f5f3f4; stroke-width: 2; }
.rl { stroke: #dcdcdc; stroke-width: 1.500px; }
.wt { stroke: #9fd7e8; stroke-width: 4.500px; }
.wt.thin { stroke-width: 1.500px; }
.round { fill: #f5f3f4; stroke: #d5dbe0; stroke-width: 12; }
.he { stroke: #7189ab; }
.hw { stroke: #91a4be; }
.hl { stroke: #7d93b3; stroke-width: 1.500px; }
.he.w8 { stroke-width: 9px; } .hw.w8 { stroke-width: 6px; }
.he.w10 { stroke-width: 12px; } .hw.w10 { stroke-width: 8px; }
.he.w12 { stroke-width: 14px; } .hw.w12 { stroke-width: 11px; }
.he.w16 { stroke-width: 17px; } .hw.w16 { stroke-width: 13px; }
.he.w22 { stroke-width: 24px; } .hw.w22 { stroke-width: 20px; }
.dotb { fill: #7189ab; }

.lb text { paint-order: stroke; stroke: #fff; stroke-opacity: 0.85; stroke-width: 8px; stroke-linejoin: round; font-size: 39px; }
.lb .av { fill: #1f2022; font-size: 31px; }
.lb .navy { fill: #27304f; }
.lb .shop { fill: #3b6fd3; }
.lb .hood { fill: #3c4043; font-weight: 500; font-size: 40px; letter-spacing: 4px; }
.lb .church { fill: #5a717d; }
.lb .park { fill: #3f8361; }
.lb .city { fill: #2d2e32; font-size: 75px; font-weight: 500; }
.lb .small { fill: #5a5d61; font-size: 25px; font-weight: 500; letter-spacing: 3px; }

.halo { fill: #fff; filter: drop-shadow(0 2px 2px rgba(0, 0, 0, 0.35)); }
.blue { fill: #4193f5; }
.slate { fill: #7b8e9a; }
.leaf { fill: #4da377; }
.bag { fill: none; stroke: #fff; stroke-width: 3; }
.bag.blueline { stroke: #4193f5; }
.cross { fill: none; stroke: #fff; stroke-width: 5.500px; }
.g { fill: #a0b45f; }
.p { fill: #8b6b9c; }
.w { fill: #fff; }
.s { fill: #e5c250; }

/* search */
.search {
  position: relative;
  height: 149px;
  flex: none;
  margin: 0 26px;
  padding-left: 39px;
  display: flex;
  align-items: center;
  border-radius: 24px;
  background: #fff;
  box-shadow: 0 4px 14px rgba(0, 0, 0, 0.28);
  color: #eceaf0;
  font-size: 52px;
}
.search svg { width: 66px; height: 72px; margin-top: 2px; fill: none; stroke: #8b6b9c; stroke-width: 8; stroke-linecap: round; }
.search span { margin-left: 37px; margin-top: 4px; white-space: nowrap; letter-spacing: 0.1px; }

/* locate button */
.locate {
  position: relative;
  width: 137px;
  height: 137px;
  margin: auto 26px 53px auto;
  padding-right: 7px;
  display: flex;
  align-items: center;
  justify-content: center;
  border: 5px solid #cecece;
  border-radius: 50%;
  background: #fff;
}
.locate svg { width: 70px; height: 72px; fill: none; stroke: #d0d0d0; stroke-width: 6.500px; stroke-linejoin: round; }

/* place card */
.card {
  position: relative;
  height: 879px;
  flex: none;
  padding: 73px 74px 0;
  border-radius: 24px;
  background: #fff;
  box-shadow: 0 18px 44px rgba(0, 0, 0, 0.32);
  color: #555;
  font-size: 40.200px;
}
.card h1 { color: #000; font-size: 52.200px; line-height: 61px; }
.rating { display: flex; align-items: center; margin-top: 22px; height: 50px; font-size: 35px; }
.rating svg { width: 174px; height: 29px; margin: 0 0 1px 16px; fill: #e5c250; }
.off { fill: #555; }
.desc { margin-top: 31px; width: 700px; line-height: 46.700px; }
.hours { display: flex; gap: 28px; margin-top: 33px; line-height: 47px; }
.closed { color: #d9594c; }
.btn {
  display: block;
  width: 826px;
  height: 105px;
  padding: 4px 0 0;
  border: 0;
  border-radius: 19px;
  color: #fff;
  font: 500 40.200px Roboto, sans-serif;
}
.go { margin-top: 54px; background: #8b6b9c; }
.more { margin-top: 39px; background: #868686; }

/* tab bar */
.tabs {
  height: 158px;
  flex: none;
  display: grid;
  grid-template-columns: 357px 362px 74px;
  align-items: center;
  padding-left: 141px;
  background: #fff;
}
.tabs svg { width: 74px; fill: none; stroke: #d4d4d4; stroke-width: 7; stroke-linecap: round; stroke-linejoin: round; }
.gesture { height: 39px; flex: none; display: flex; justify-content: center; align-items: center; background: #000; }
.gesture i { width: 324px; height: 11px; border-radius: 5px; background: #5c5c5c; }
```
